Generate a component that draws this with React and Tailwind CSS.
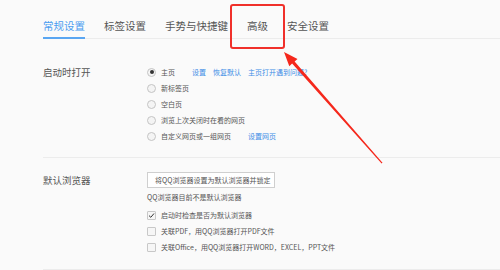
import React from "react";

const tabs = ["常规设置", "标签设置", "手势与快捷键", "高级", "安全设置"];

function Radio({ checked }) {
  return (
    <span className="w-[9px] h-[9px] rounded-full border border-[#c4c4c4] bg-[#f4f4f4] flex items-center justify-center shrink-0">
      {checked && <span className="w-[4px] h-[4px] rounded-full bg-[#333]" />}
    </span>
  );
}

function Check({ checked }) {
  return (
    <span className="w-[9px] h-[9px] rounded-[1px] border border-[#c8c8c8] bg-[#f6f6f6] flex items-center justify-center shrink-0">
      {checked && (
        <svg width="7" height="7" viewBox="0 0 7 7">
          <path d="M1 3.6 L2.8 5.3 L6 1.5" fill="none" stroke="#333" strokeWidth="1" />
        </svg>
      )}
    </span>
  );
}

export default function App() {
  return (
    <div
      className="relative w-[500px] h-[270px] overflow-hidden bg-[#fafafa] text-[#555]"
      style={{ fontFamily: '"Noto Sans CJK SC", "Noto Sans", sans-serif' }}
    >
      {/* tabs */}
      <div className="ml-[43px] h-[39px] flex items-end gap-[19px] border-b border-[#ececec]">
        {tabs.map((t, i) => (
          <div
            key={t}
            className={
              "text-[10.5px] leading-[14px] pb-[4px] -mb-px border-b-2 " +
              (i === 0 ? "border-[#5aa6f2] text-[#4a9cf0]" : "border-transparent text-[#555]")
            }
          >
            {t}
          </div>
        ))}
      </div>

      {/* 启动时打开 */}
      <div className="ml-[43px] flex pt-[25px] pb-[13px] border-b border-[#ececec]">
        <div className="w-[104px] h-[16px] flex items-center text-[9.5px] text-[#555]">启动时打开</div>
        <div className="flex flex-col text-[7px]">
          <div className="h-[16px] flex items-center">
            <Radio checked />
            <span className="ml-[5px]">主页</span>
            <span className="ml-[17px] text-[#3d8de6]">设置</span>
            <span className="ml-[7px] text-[#3d8de6]">恢复默认</span>
            <span className="ml-[7px] text-[#3d8de6]">主页打开遇到问题?</span>
          </div>
          <div className="h-[16px] flex items-center">
            <Radio />
            <span className="ml-[5px]">新标签页</span>
          </div>
          <div className="h-[16px] flex items-center">
            <Radio />
            <span className="ml-[5px]">空白页</span>
          </div>
          <div className="h-[16px] flex items-center">
            <Radio />
            <span className="ml-[5px]">浏览上次关闭时在看的网页</span>
          </div>
          <div className="h-[16px] flex items-center">
            <Radio />
            <span className="ml-[5px]">自定义网页或一组网页</span>
            <span className="ml-[17px] text-[#3d8de6]">设置网页</span>
          </div>
        </div>
      </div>

      {/* 默认浏览器 */}
      <div className="ml-[43px] flex pt-[14px] pb-[14px] border-b border-[#ececec]">
        <div className="w-[104px] h-[16px] flex items-center text-[9.5px] text-[#555]">默认浏览器</div>
        <div className="flex flex-col text-[7px]">
          <div className="h-[16px] w-[128px] flex items-center border border-[#cfcfcf] bg-white pl-[7px] text-[#555]">
            将QQ浏览器设置为默认浏览器并锁定
          </div>
          <div className="h-[19px] flex items-center">QQ浏览器目前不是默认浏览器</div>
          <div className="h-[16px] flex items-center">
            <Check checked />
            <span className="ml-[5px]">启动时检查是否为默认浏览器</span>
          </div>
          <div className="h-[16px] flex items-center">
            <Check />
            <span className="ml-[5px]">关联PDF，用QQ浏览器打开PDF文件</span>
          </div>
          <div className="h-[16px] flex items-center">
            <Check />
            <span className="ml-[5px] whitespace-nowrap">关联Office，用QQ浏览器打开WORD，EXCEL，PPT文件</span>
          </div>
        </div>
      </div>

      {/* annotation */}
      <div className="absolute left-[230px] top-[4px] w-[55px] h-[45px] border-2 border-[#f0302a] rounded-[3px]" />
      <svg className="absolute left-0 top-0" width="500" height="270" viewBox="0 0 500 270">
        <polygon
          points="284,52 297.5,59 294.6,61.6 382.5,162.8 381.6,163.4 292.1,63.6 289.3,66.2"
          fill="#f5281c"
        />
      </svg>
    </div>
  );
}
